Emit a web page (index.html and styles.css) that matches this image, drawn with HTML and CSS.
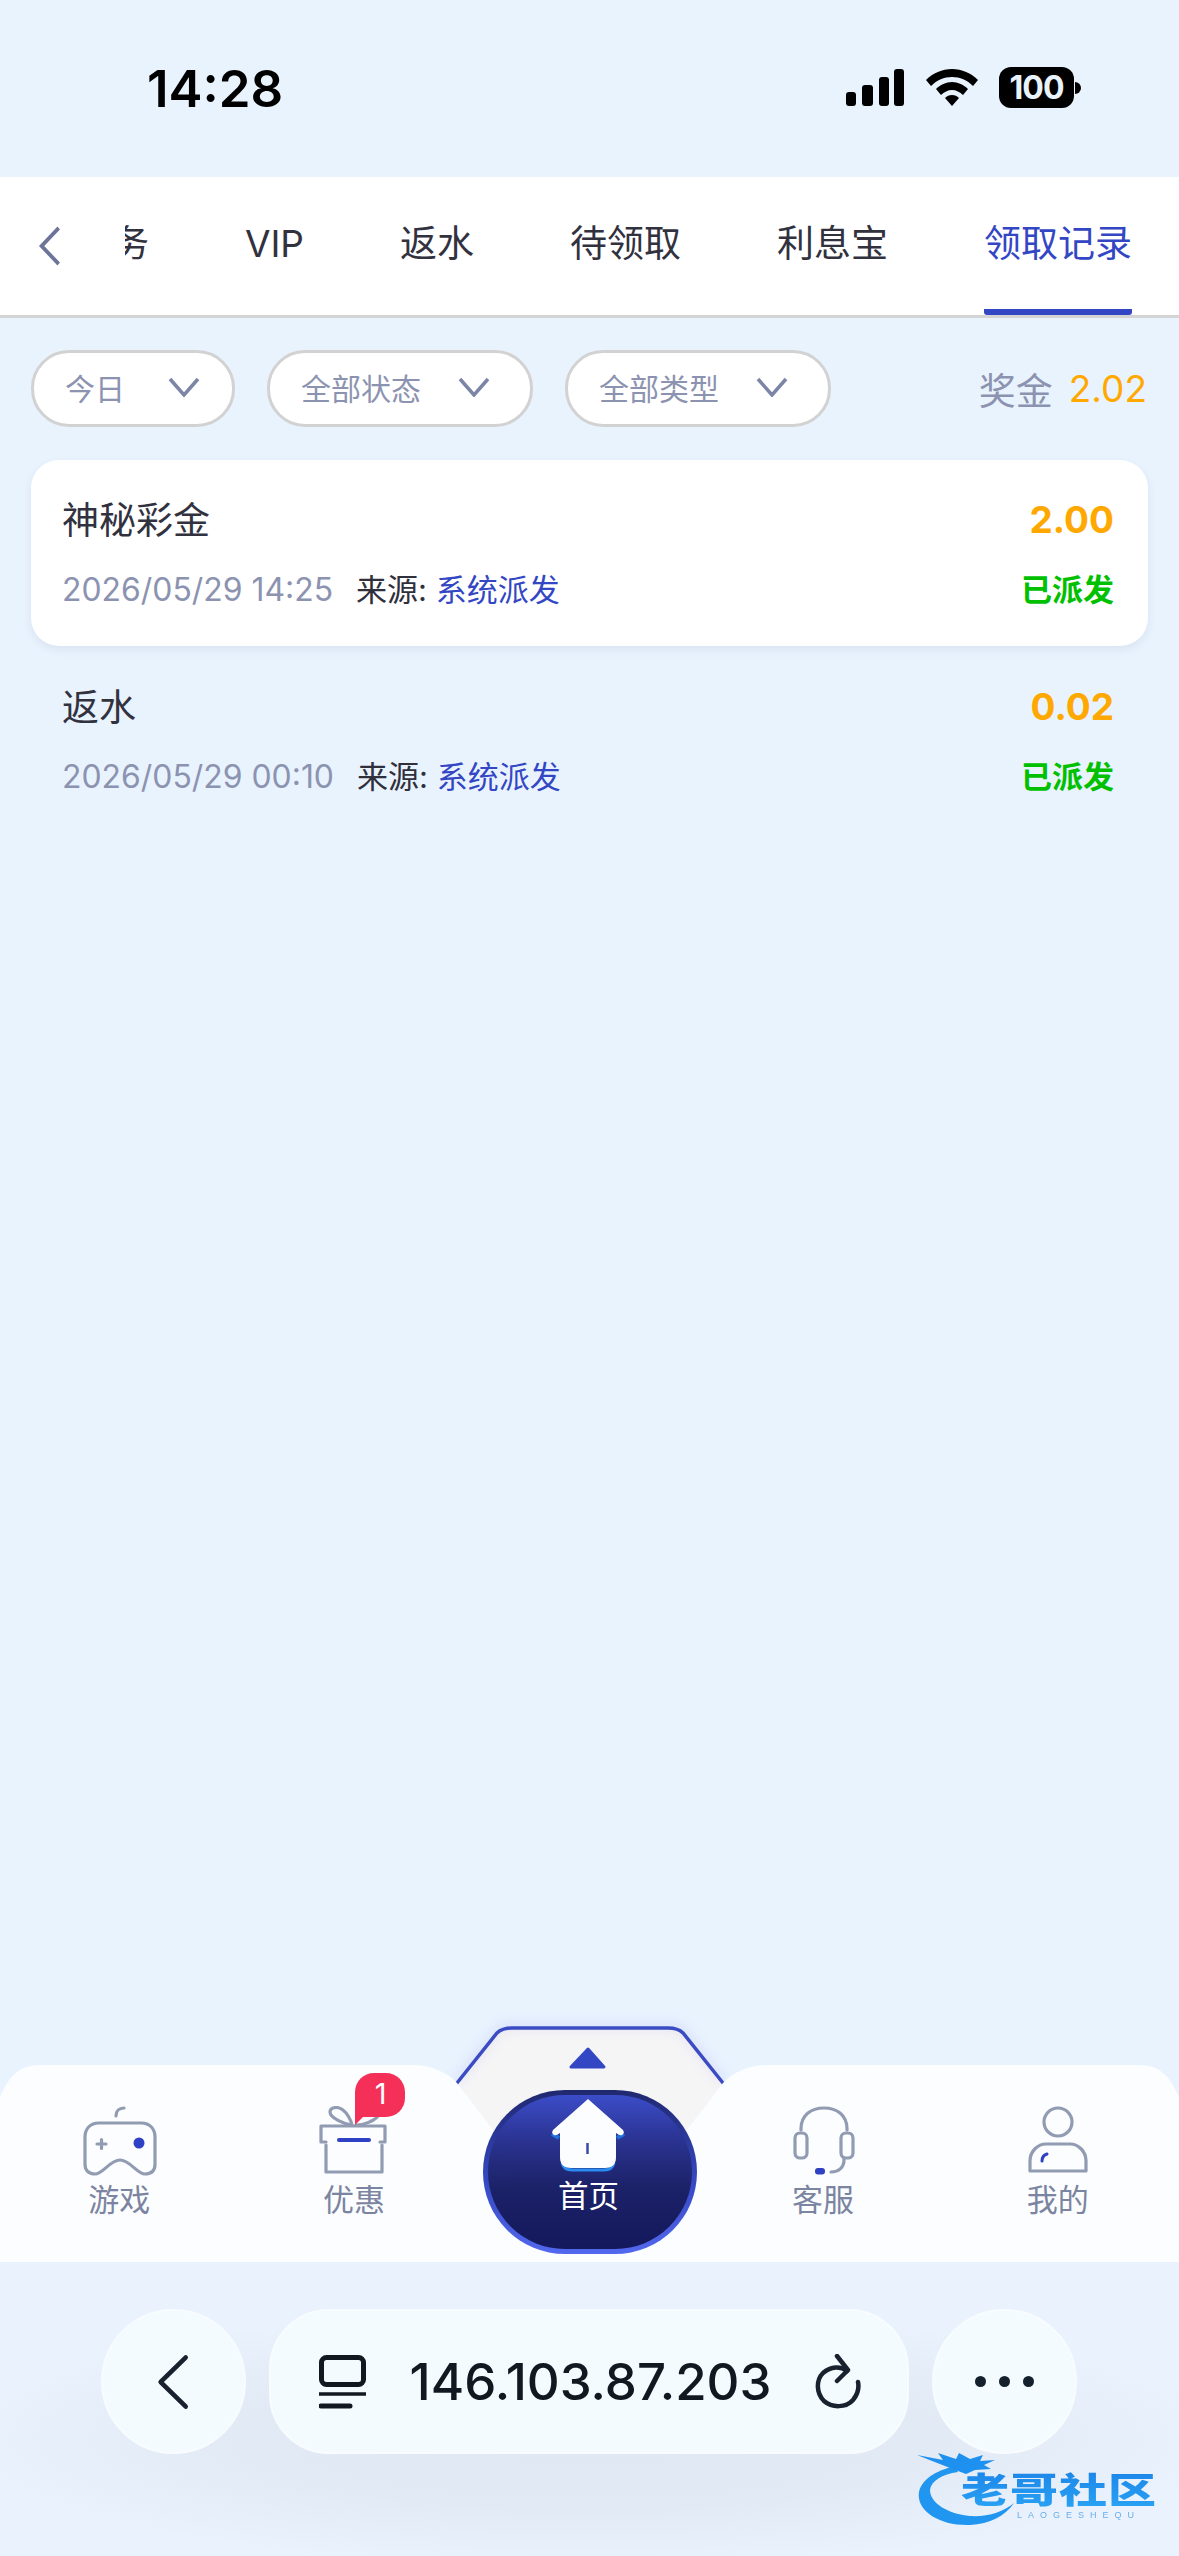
FILE: index.html
```html
<!DOCTYPE html>
<html lang="zh-CN">
<head>
    <meta charset="UTF-8">
    <meta name="viewport" content="width=device-width, initial-scale=1.0">
    <title>领取记录</title>
    <link rel="stylesheet" href="styles.css">
</head>
<body>
    <div class="screen">
        <div class="status-bar">
            <span class="time">14:28</span>
            <div class="status-icons">
                <svg class="signal" viewBox="0 0 58 37"><rect x="0" y="23" width="10" height="14" rx="3"/><rect x="16" y="16" width="11" height="21" rx="3"/><rect x="33" y="8" width="10" height="29" rx="3"/><rect x="48" y="0" width="10" height="37" rx="3"/></svg>
                <svg class="wifi" viewBox="0 0 52 37"><path d="M26 0C36 0 45 4 52 11L47 17C41 11 34 8 26 8C18 8 11 11 5 17L0 11C7 4 16 0 26 0Z"/><path d="M26 13C32 13 38 16 42 20L37 26C34 23 30 21 26 21C22 21 18 23 15 26L10 20C14 16 20 13 26 13Z"/><path d="M26 26C29 26 31 27 33 29L26 37L19 29C21 27 23 26 26 26Z"/></svg>
                <div class="battery"><span class="battery-level">100</span></div>
            </div>
        </div>

        <div class="tabs">
            <svg class="tabs-back" viewBox="0 0 26 40"><path d="M23 2L4 20L23 38" transform="matrix(.9 0 0 1 1 0)"/></svg>
            <div class="tabs-scroll">
                <div class="tab">任务</div>
                <div class="tab">VIP</div>
                <div class="tab">返水</div>
                <div class="tab">待领取</div>
                <div class="tab">利息宝</div>
                <div class="tab active">领取记录</div>
            </div>
        </div>

        <div class="filters">
            <div class="pill pill-short"><span>今日</span><svg class="pill-arrow" viewBox="0 0 32 20"><path d="M2 2L16 18L30 2"/></svg></div>
            <div class="pill"><span>全部状态</span><svg class="pill-arrow" viewBox="0 0 32 20"><path d="M2 2L16 18L30 2"/></svg></div>
            <div class="pill"><span>全部类型</span><svg class="pill-arrow" viewBox="0 0 32 20"><path d="M2 2L16 18L30 2"/></svg></div>
            <div class="bonus">奖金<span class="bonus-value">2.02</span></div>
        </div>

        <div class="records">
            <div class="record first">
                <div class="record-line">
                    <span class="record-name">神秘彩金</span>
                    <span class="record-amount">2.00</span>
                </div>
                <div class="record-line record-sub">
                    <span><span class="record-date">2026/05/29 14:25</span><span class="record-from">来源:</span> <span class="record-source">系统派发</span></span>
                    <span class="record-state">已派发</span>
                </div>
            </div>
            <div class="record">
                <div class="record-line">
                    <span class="record-name">返水</span>
                    <span class="record-amount">0.02</span>
                </div>
                <div class="record-line record-sub">
                    <span><span class="record-date">2026/05/29 00:10</span><span class="record-from">来源:</span> <span class="record-source">系统派发</span></span>
                    <span class="record-state">已派发</span>
                </div>
            </div>
        </div>

        <div class="nav">
            <svg class="nav-bg" viewBox="0 2027 1179 235">
                <path class="nav-flap" d="M457 2083L497 2033Q502 2027 512 2027H668Q678 2027 683 2033L723 2083L660 2170H520Z"/>
                <path class="nav-flap-line" d="M457 2083L497 2033Q502 2028 512 2028H668Q678 2028 683 2033L723 2083"/>
                <path class="nav-arrow" d="M588 2049L604 2067H571Z"/>
                <path class="nav-white" d="M0 2262V2097C8 2078 18 2065 40 2065H415C430 2065 447 2072 457 2083L520 2165H660L723 2083C733 2072 750 2065 765 2065H1139C1161 2065 1171 2078 1179 2097V2262Z"/>
            </svg>
            <div class="nav-item">
                <svg class="nav-icon" viewBox="0 0 80 72">
                    <path d="M20 17H62C71 17 76 23 76 31V58C76 65 72 68 66 68C58 68 51 54 41 54C31 54 24 68 16 68C10 68 6 65 6 58V31C6 23 11 17 20 17Z"/>
                    <path d="M37 10C37 5 40 2 45 2"/>
                    <path d="M18 38H27M22.5 33.500V42.500"/>
                    <circle class="icon-blue" cx="60" cy="37" r="5.500"/>
                </svg>
                <span class="nav-label">游戏</span>
            </div>
            <div class="nav-item">
                <svg class="nav-icon" viewBox="0 0 80 72">
                    <path d="M12 36H7V20H71V36H66"/>
                    <path d="M12 39V66H68V39"/>
                    <path d="M38 19C30 18 16 12 16 6C16 1 24 0 29 4C33 7 37 14 38 19Z"/>
                    <path d="M42 19C50 19 60 15 64 10"/>
                    <path class="icon-blue-line" d="M25 34H55"/>
                </svg>
                <span class="nav-label">优惠</span>
                <div class="nav-badge"><span>1</span></div>
            </div>
            <div class="nav-item nav-home">
                <div class="home-btn">
                    <svg class="home-icon" viewBox="0 0 80 76">
                        <path class="home-glow" d="M14 66Q16 73 24 73H56Q64 73 66 66"/>
                        <path class="home-eave" d="M4 37L11 41M76 37L69 41"/>
                        <path class="home-body" d="M40 2L75 33Q77 36 74 38Q72 39 68 36V60Q68 71 57 71H23Q12 71 12 60V36Q8 39 6 38Q3 36 5 33Z"/>
                        <path class="home-door" d="M39.500 46V57"/>
                    </svg>
                    <span class="home-label">首页</span>
                </div>
            </div>
            <div class="nav-item">
                <svg class="nav-icon" viewBox="0 0 80 72">
                    <path d="M18 24V23C18 9 28 2 41 2C54 2 64 9 64 23V24"/>
                    <rect x="12" y="27" width="12" height="25" rx="5"/>
                    <rect x="58" y="27" width="12" height="25" rx="5"/>
                    <path d="M61 52V54C61 61 56 66 48 66"/>
                    <rect class="icon-blue" x="32" y="62" width="10" height="6.500" rx="3"/>
                </svg>
                <span class="nav-label">客服</span>
            </div>
            <div class="nav-item">
                <svg class="nav-icon" viewBox="0 0 80 72">
                    <circle cx="40" cy="16" r="14"/>
                    <path d="M12 65V55C12 45 20 38 28 38H52C60 38 68 45 68 55V65Z"/>
                    <path class="icon-blue-line thin" d="M24 55C24 51 26 49 29 48"/>
                </svg>
                <span class="nav-label">我的</span>
            </div>
        </div>

        <div class="browser-bar">
            <div class="round-btn">
                <svg class="bar-back" viewBox="0 0 36 58"><path d="M32 3L4 29L32 55" transform="matrix(.95 0 0 1 0 0)"/></svg>
            </div>
            <div class="url-box">
                <svg class="bar-tabs" viewBox="0 0 47 54"><rect x="2.500" y="2.500" width="42" height="27" rx="5"/><path d="M0 39H47" class="thin-line"/><path d="M2 51H31"/></svg>
                <span class="url-text">146.103.87.203</span>
                <svg class="bar-reload" viewBox="0 0 46 56"><path d="M32 17C26 12 16 12 8 19C1 26 1 39 9 47C17 54 31 54 38 46C43 40 44 33 43 28"/><path d="M22 2L33 16L22 27"/></svg>
            </div>
            <div class="round-btn">
                <div class="dots"><i></i><i></i><i></i></div>
            </div>
        </div>

        <svg class="logo" viewBox="905 2445 274 90">
            <defs>
                <linearGradient id="logoText" x1="0" y1="0" x2="0" y2="1">
                    <stop offset="0" stop-color="#1a7fe6"/>
                    <stop offset="1" stop-color="#2aa6f5"/>
                </linearGradient>
            </defs>
            <path class="logo-dragon" d="M955 2466C935 2471 922 2479 919 2492C916 2510 938 2526 970 2525C990 2524 1005 2516 1014 2503C1003 2512 988 2517 970 2516C948 2514 930 2503 930 2490C931 2481 942 2474 958 2472Z"/>
            <path class="logo-mane" d="M917 2455L943 2460L938 2453L956 2459L959 2453L970 2459L983 2455L980 2461L995 2460L984 2465L991 2469L975 2470L966 2474L950 2468Z"/>
            <text class="logo-name" transform="matrix(1 0 0 .74 0 651)" x="961" y="2503" fill="url(#logoText)">老哥社区</text>
            <text class="logo-sub" x="1017" y="2518">LAOGESHEQU</text>
        </svg>
    </div>
</body>
</html>
```

FILE: styles.css
```css
* {
    box-sizing: border-box;
}
body {
    margin: 0;
    background-color: #e9f3fe;
    font-family: Inter, "Noto Sans CJK SC", sans-serif;
}
.screen {
    position: relative;
    width: 1179px;
    height: 2556px;
    display: flex;
    flex-direction: column;
    overflow: hidden;
    background-color: #e9f3fe;
}

/* status bar */
.status-bar {
    height: 177px;
    padding: 59px 98px 0 147px;
    display: flex;
    justify-content: space-between;
    align-items: flex-start;
}
.time {
    font-size: 51px;
    line-height: 60px;
    font-weight: 600;
    color: #000;
}
.status-icons {
    display: flex;
    align-items: flex-start;
    padding-top: 10px;
}
.signal {
    width: 58px;
    height: 37px;
    fill: #000;
}
.wifi {
    width: 52px;
    height: 37px;
    margin-left: 22px;
    fill: #000;
}
.battery {
    position: relative;
    width: 75px;
    height: 41px;
    margin: -2px 7px 0 21px;
    background-color: #000;
    border-radius: 12px;
    display: flex;
    align-items: center;
    justify-content: center;
}
.battery::after {
    content: "";
    position: absolute;
    right: -7px;
    top: 15px;
    width: 6px;
    height: 12px;
    background-color: #000;
    border-radius: 0 6px 6px 0;
}
.battery-level {
    font-size: 32px;
    font-weight: 700;
    letter-spacing: -1px;
    color: #e9f3fe;
}

/* tabs */
.tabs {
    height: 141px;
    background-color: #fff;
    border-bottom: 3px solid #d4d4d4;
    display: flex;
    align-items: stretch;
}
.tabs-back {
    width: 26px;
    height: 40px;
    margin: 49px 0 0 37px;
    flex-shrink: 0;
    fill: none;
    stroke: #6d7499;
    stroke-width: 4;
}
.tabs-scroll {
    flex: 1;
    margin-left: 62px;
    padding-right: 47px;
    display: flex;
    justify-content: flex-end;
    gap: 96px;
    overflow: hidden;
}
.tab {
    flex-shrink: 0;
    height: 138px;
    padding-top: 44px;
    font-size: 37px;
    line-height: 46px;
    color: #32323f;
    border-bottom: 6px solid transparent;
}
.tab.active {
    color: #3346c4;
    border-bottom-color: #3346c4;
    border-radius: 0 0 3px 3px;
}

/* filters */
.filters {
    padding: 32px 32px 0 31px;
    display: flex;
    align-items: center;
    gap: 32px;
}
.pill {
    width: 266px;
    height: 77px;
    padding: 0 40px 3px 31px;
    background-color: #fff;
    border: 3px solid #d2d2d2;
    border-radius: 38px;
    display: flex;
    align-items: center;
    justify-content: space-between;
    font-size: 30px;
    color: #8c93b0;
}
.pill-short {
    width: 204px;
    padding-right: 32px;
}
.pill-arrow {
    width: 32px;
    height: 20px;
    fill: none;
    stroke: #7d85a6;
    stroke-width: 3.500;
}
.bonus {
    margin-left: auto;
    font-size: 37px;
    color: #8c93b0;
    display: flex;
    align-items: center;
}
.bonus-value {
    margin-left: 16px;
    color: #ffa800;
}

/* records */
.records {
    flex: 1;
    padding: 33px 31px 0;
}
.record {
    height: 187px;
    padding: 37px 34px 0 31px;
}
.record.first {
    height: 186px;
    padding-top: 36px;
    background-color: #fff;
    border-radius: 28px;
    box-shadow: 0 4px 10px rgba(40, 60, 100, 0.08);
}
.record-line {
    display: flex;
    justify-content: space-between;
    align-items: center;
    height: 44px;
}
.record-sub {
    margin-top: 25px;
    font-size: 31px;
}
.record-name {
    font-size: 37px;
    color: #32323f;
}
.record-amount {
    padding-top: 2px;
    font-size: 37px;
    font-weight: 700;
    color: #ffa800;
}
.record-date {
    font-size: 31.900px;
    color: #8c93b0;
    margin-right: 23px;
}
.record-from {
    color: #30303c;
}
.record-source {
    color: #3346c4;
}
.record-state {
    font-weight: 700;
    color: #00c000;
}

/* bottom nav */
.nav {
    position: relative;
    height: 235px;
    padding: 0 4px 0 2px;
    display: flex;
}
.nav-bg {
    position: absolute;
    left: 0;
    top: 0;
    width: 1179px;
    height: 235px;
    overflow: visible;
}
.nav-flap {
    fill: #f5f5f6;
}
.nav-flap-line {
    fill: none;
    stroke: #3a4bc4;
    stroke-width: 3.500;
    stroke-linecap: round;
    filter: drop-shadow(0 -2px 6px rgba(90, 80, 220, 0.25));
}
.nav-arrow {
    fill: #3346c4;
    stroke: #3346c4;
    stroke-width: 3;
    stroke-linejoin: round;
}
.nav-white {
    fill: #fbfdff;
}
.nav-item {
    position: relative;
    flex: 1;
    min-width: 0;
    padding-top: 79px;
    display: flex;
    flex-direction: column;
    align-items: center;
}
.nav-icon {
    width: 80px;
    height: 72px;
    fill: none;
    stroke: #919bb1;
    stroke-width: 3.200;
    stroke-linecap: round;
    stroke-linejoin: round;
}
.icon-blue {
    fill: #2f41c4;
    stroke: none;
}
.icon-blue-line {
    stroke: #2f41c4;
    stroke-width: 4;
}
.icon-blue-line.thin {
    stroke-width: 3;
}
.nav-label {
    margin-top: 3px;
    font-size: 31px;
    line-height: 38px;
    color: #7b84a0;
}
.nav-badge {
    position: absolute;
    left: 118px;
    top: 46px;
    width: 50px;
    height: 44px;
    background-color: #f43058;
    border-radius: 19px 19px 19px 0;
    color: #fff;
    font-size: 29px;
    line-height: 42px;
    text-align: center;
}
.nav-badge span {
    position: relative;
    left: 1px;
}
.nav-badge::after {
    content: "";
    position: absolute;
    left: 0;
    top: 36px;
    width: 0;
    height: 0;
    border-top: 16px solid #f43058;
    border-right: 16px solid transparent;
}
.nav-home {
    padding-top: 0;
    justify-content: flex-end;
    padding-bottom: 8px;
}
.home-btn {
    width: 214px;
    height: 164px;
    margin-left: 3px;
    padding: 2px 3px 0 0;
    border: 5px solid transparent;
    border-radius: 82px;
    background:
        linear-gradient(#3b4cc8 0%, #2a3390 30%, #1c2268 60%, #14185c 100%) padding-box,
        linear-gradient(#20286e 0%, #3548c2 55%, #5268ee 100%) border-box;
    display: flex;
    flex-direction: column;
    align-items: center;
}
.home-icon {
    width: 80px;
    height: 76px;
    flex-shrink: 0;
}
.home-glow {
    fill: none;
    stroke: #2a8bf0;
    stroke-width: 3;
}
.home-eave {
    fill: none;
    stroke: #1f6fdc;
    stroke-width: 4;
}
.home-body {
    fill: #fbfdff;
}
.home-door {
    fill: none;
    stroke: #3b4aa8;
    stroke-width: 2.500;
}
.home-label {
    margin-top: 4px;
    font-size: 30.500px;
    line-height: 38px;
    color: #fff;
}

/* browser bar */
.browser-bar {
    flex-shrink: 0;
    height: 294px;
    padding: 47px 0 0 101px;
    display: flex;
    align-items: flex-start;
    gap: 23px;
    background: radial-gradient(ellipse 640px 130px at 50% 60%, #dfe7f2 0%, #e2eaf5 55%, #e9f2fd 100%);
}
.round-btn {
    width: 145px;
    height: 145px;
    flex-shrink: 0;
    border-radius: 50%;
    background-color: #f3fbff;
    border: 2px solid #f8fcff;
    display: flex;
    align-items: center;
    justify-content: center;
}
.bar-back {
    width: 34px;
    height: 56px;
    fill: none;
    stroke: #18222e;
    stroke-width: 5;
    stroke-linecap: round;
    stroke-linejoin: round;
}
.url-box {
    width: 640px;
    height: 145px;
    padding: 0 46px 0 48px;
    border-radius: 60px;
    background-color: #f3fbff;
    border: 2px solid #f8fcff;
    display: flex;
    align-items: center;
    justify-content: space-between;
}
.bar-tabs {
    width: 47px;
    height: 54px;
    fill: none;
    stroke: #12181f;
    stroke-width: 5;
    stroke-linecap: round;
}
.thin-line {
    stroke-width: 3.500;
}
.url-text {
    font-size: 51px;
    font-weight: 500;
    color: #12181f;
}
.bar-reload {
    width: 46px;
    height: 56px;
    fill: none;
    stroke: #18222e;
    stroke-width: 4.500;
    stroke-linecap: round;
    stroke-linejoin: round;
}
.dots {
    display: flex;
    gap: 13px;
}
.dots i {
    width: 11px;
    height: 11px;
    border-radius: 50%;
    background-color: #14202c;
}

/* watermark */
.logo {
    position: absolute;
    left: 905px;
    top: 2445px;
    width: 274px;
    height: 90px;
    filter: blur(0.7px);
}
.logo-dragon {
    fill: #2196f0;
}
.logo-mane {
    fill: #1e90f0;
}
.logo-name {
    font-family: "Noto Sans CJK SC", sans-serif;
    font-size: 48px;
    font-weight: 900;
    letter-spacing: 1px;
}
.logo-sub {
    font-family: "Liberation Sans", sans-serif;
    font-size: 9px;
    letter-spacing: 6px;
    fill: #6aaee8;
}
```
